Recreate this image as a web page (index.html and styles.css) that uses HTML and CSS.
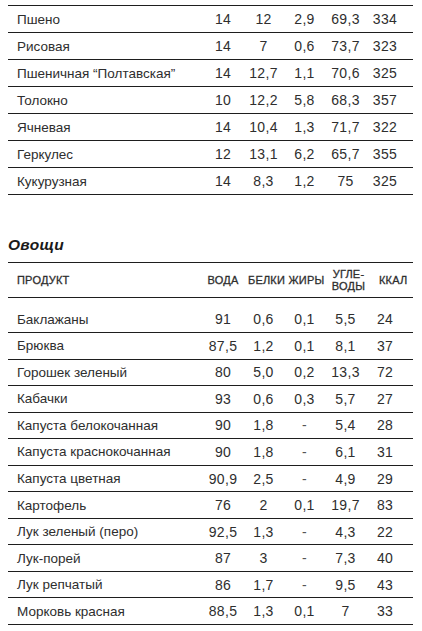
FILE: index.html
```
<!DOCTYPE html>
<html lang="ru">
<head>
<meta charset="utf-8">
<link rel="stylesheet" href="styles.css">
</head>
<body>
<div class="page">
  <div class="table t-top">
    <div class="row"><span class="name">Пшено</span><span>14</span><span>12</span><span>2,9</span><span>69,3</span><span>334</span></div>
    <div class="row"><span class="name">Рисовая</span><span>14</span><span>7</span><span>0,6</span><span>73,7</span><span>323</span></div>
    <div class="row"><span class="name">Пшеничная “Полтавская”</span><span>14</span><span>12,7</span><span>1,1</span><span>70,6</span><span>325</span></div>
    <div class="row"><span class="name">Толокно</span><span>10</span><span>12,2</span><span>5,8</span><span>68,3</span><span>357</span></div>
    <div class="row"><span class="name">Ячневая</span><span>14</span><span>10,4</span><span>1,3</span><span>71,7</span><span>322</span></div>
    <div class="row"><span class="name">Геркулес</span><span>12</span><span>13,1</span><span>6,2</span><span>65,7</span><span>355</span></div>
    <div class="row"><span class="name">Кукурузная</span><span>14</span><span>8,3</span><span>1,2</span><span>75</span><span>325</span></div>
  </div>

  <h2 class="section-title">Овощи</h2>

  <div class="table t-bottom">
    <div class="row head"><span class="name">ПРОДУКТ</span><span class="h1">ВОДА</span><span class="h2">БЕЛКИ</span><span class="h3">ЖИРЫ</span><span class="h4">УГЛЕ-<br>ВОДЫ</span><span class="h5">ККАЛ</span></div>
    <div class="row first"><span class="name">Баклажаны</span><span>91</span><span>0,6</span><span>0,1</span><span>5,5</span><span>24</span></div>
    <div class="row"><span class="name">Брюква</span><span>87,5</span><span>1,2</span><span>0,1</span><span>8,1</span><span>37</span></div>
    <div class="row"><span class="name">Горошек зеленый</span><span>80</span><span>5,0</span><span>0,2</span><span>13,3</span><span>72</span></div>
    <div class="row"><span class="name">Кабачки</span><span>93</span><span>0,6</span><span>0,3</span><span>5,7</span><span>27</span></div>
    <div class="row"><span class="name">Капуста белокочанная</span><span>90</span><span>1,8</span><span class="dash">-</span><span>5,4</span><span>28</span></div>
    <div class="row"><span class="name">Капуста краснокочанная</span><span>90</span><span>1,8</span><span class="dash">-</span><span>6,1</span><span>31</span></div>
    <div class="row"><span class="name">Капуста цветная</span><span>90,9</span><span>2,5</span><span class="dash">-</span><span>4,9</span><span>29</span></div>
    <div class="row"><span class="name">Картофель</span><span>76</span><span>2</span><span>0,1</span><span>19,7</span><span>83</span></div>
    <div class="row"><span class="name">Лук зеленый (перо)</span><span>92,5</span><span>1,3</span><span class="dash">-</span><span>4,3</span><span>22</span></div>
    <div class="row"><span class="name">Лук-порей</span><span>87</span><span>3</span><span class="dash">-</span><span>7,3</span><span>40</span></div>
    <div class="row"><span class="name">Лук репчатый</span><span>86</span><span>1,7</span><span class="dash">-</span><span>9,5</span><span>43</span></div>
    <div class="row"><span class="name">Морковь красная</span><span>88,5</span><span>1,3</span><span>0,1</span><span>7</span><span>33</span></div>
  </div>
</div>
</body>
</html>
```
FILE: styles.css
```
html, body {
  margin: 0;
  padding: 0;
  background: #ffffff;
}

.page {
  padding: 5px 9px 0 8px;
  font-family: "Liberation Sans", Arial, sans-serif;
  color: #2e2e2e;
}

.table {
  border-top: 1px solid #1e1e1e;
}

.row {
  display: grid;
  grid-template-columns: 195px 40px 41px 41px 41px 38px;
  align-items: center;
  border-bottom: 1px solid #1e1e1e;
  font-size: 14px;
  box-sizing: border-box;
}

.row > span {
  text-align: center;
  letter-spacing: 0.3px;
}

.row > .name {
  text-align: left;
  padding-left: 9px;
  letter-spacing: 0;
  font-size: 13.5px;
}

.t-top .row {
  height: 27px;
}

.t-bottom .row {
  height: 26.55px;
}

.t-bottom .row.head {
  height: 35px;
  font-size: 11px;
  line-height: 12.5px;
  font-weight: 400;
  -webkit-text-stroke: 0.3px #2e2e2e;
}

.t-bottom .row.head > span {
  letter-spacing: 0.2px;
  font-size: 11px;
}

.t-bottom .row.head .h2 { padding-left: 5px; }
.t-bottom .row.head .h3 { padding-left: 4px; }
.t-bottom .row.head .h4 { padding-left: 6px; }
.t-bottom .row.head .h5 { padding-left: 13px; }

.t-bottom .row.first {
  height: 35px;
  padding-top: 8px;
}

.dash {
  color: #555;
}

.section-title {
  margin: 40px 0 7px 0;
  font-size: 15.5px;
  line-height: 20px;
  font-weight: 700;
  font-style: italic;
  color: #1a1a1a;
  letter-spacing: 0.3px;
}
```
